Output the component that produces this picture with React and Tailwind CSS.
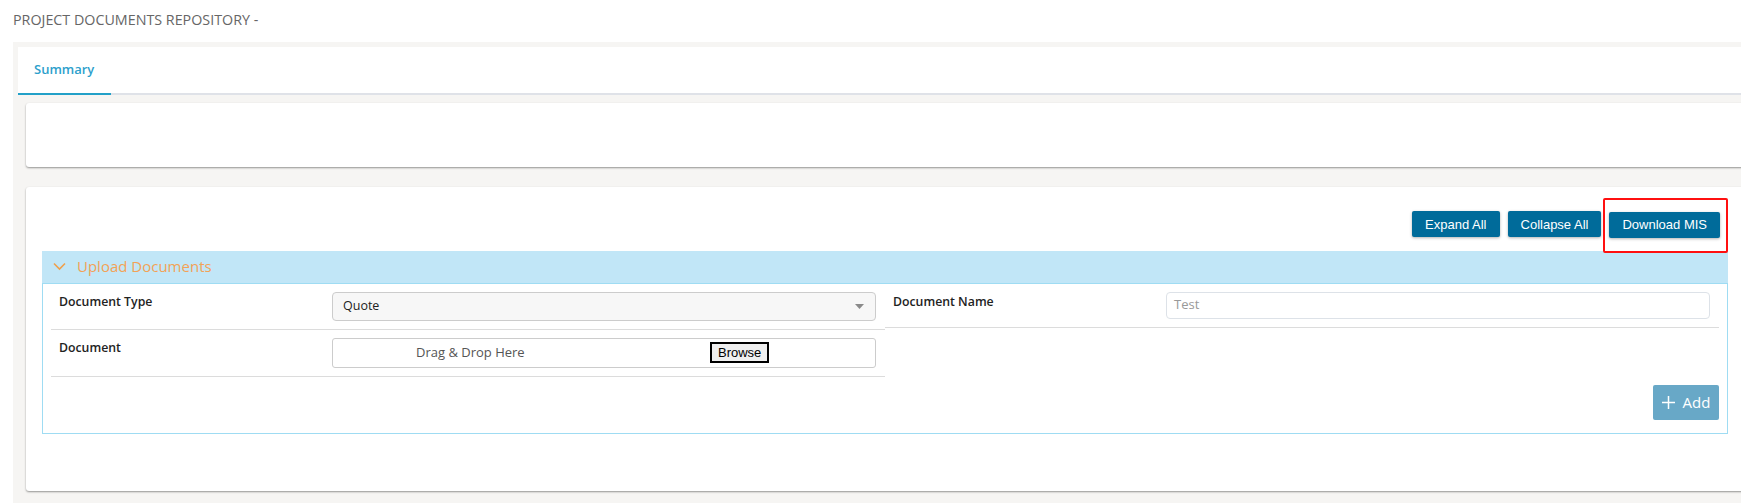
import React from "react";

const OS = { fontFamily: '"Open Sans", "Noto Sans", Arial, sans-serif' };

function Btn({ children }) {
  return (
    <button
      className="h-[26px] px-[13px] rounded-[2px] bg-[#006b9a] text-white text-[13px] leading-none shadow-[0_1px_3px_rgba(0,0,0,0.3)]"
      style={{ fontFamily: '"Liberation Sans", Arial, sans-serif' }}
    >
      {children}
    </button>
  );
}

export default function App() {
  return (
    <div className="w-full h-[503px] overflow-hidden bg-white" style={OS}>
      <div className="h-[42px] pl-[13px] pt-[10px] text-[14.3px] leading-[20px] text-[#666]">
        PROJECT DOCUMENTS REPOSITORY -
      </div>
      <div className="ml-[13px] w-[1760px] h-[461px] bg-[#f6f5f3] pt-[5px] pl-[5px]">
        {/* Tab strip */}
        <div className="h-[48px] bg-white flex flex-col">
          <div className="flex-1 flex items-center pl-[16px] text-[13px] font-semibold text-[#2d9fcc]">
            Summary
          </div>
          <div className="h-[2px] bg-[#dfe2e8] flex">
            <div className="w-[93px] h-[2px] bg-[#22a0c8]" />
          </div>
        </div>
        {/* Card 1 */}
        <div className="ml-[8px] mt-[8px] w-[1718px] h-[64px] bg-white rounded-[3px] shadow-[0_1px_2px_rgba(0,0,0,0.4)]" />
        {/* Card 2 */}
        <div className="ml-[8px] mt-[20px] w-[1718px] h-[304px] bg-white rounded-[3px] shadow-[0_1px_2px_rgba(0,0,0,0.4)] pt-[24px] px-[16px]">
          <div className="flex justify-end gap-[8px] pr-[8px]">
            <Btn>Expand All</Btn>
            <Btn>Collapse All</Btn>
            <div className="relative">
              <Btn>Download MIS</Btn>
              <div className="absolute -left-[6px] -right-[8px] -top-[13px] -bottom-[15px] border-2 border-[#ff1010] rounded-[2px] pointer-events-none" />
            </div>
          </div>
          {/* Accordion header */}
          <div className="mt-[13px] h-[32px] bg-[#c1e6f7] flex items-center pl-[11px]">
            <svg width="13" height="9" viewBox="0 0 13 9" className="mr-[11px]">
              <path d="M1 1.5 L6.5 7 L12 1.5" fill="none" stroke="#f0a04b" strokeWidth="1.6" />
            </svg>
            <span className="text-[15px] text-[#f3a256] leading-none">Upload Documents</span>
          </div>
          {/* Accordion body */}
          <div className="border border-[#9fdcf3] px-[8px] pb-[13px]">
            <div className="flex">
              <div className="w-[834px]">
                <div className="flex py-[8px] border-b border-[#dcdcdc]">
                  <div className="w-[281px] pl-[8px] text-[12.3px] leading-[20px] font-semibold text-[#222]">Document Type</div>
                  <div className="w-[544px] h-[29px] bg-[#f7f7f7] border border-[#cccccc] rounded-[4px] flex items-center pl-[10px] pr-[11px] text-[12.5px] text-[#222]">
                    <span className="flex-1">Quote</span>
                    <svg width="9" height="5" viewBox="0 0 9 5"><path d="M0 0 L9 0 L4.5 5 Z" fill="#8a8a8a" /></svg>
                  </div>
                </div>
                <div className="flex py-[8px] border-b border-[#dcdcdc]">
                  <div className="w-[281px] pl-[8px] text-[12.3px] leading-[20px] font-semibold text-[#222]">Document</div>
                  <div className="w-[544px] h-[30px] bg-white border border-[#cccccc] rounded-[3px] flex items-center text-[13px]">
                    <span className="w-[377px] pl-[83px] text-[#555]">Drag &amp; Drop Here</span>
                    <span
                      className="h-[21px] px-[6px] border-2 border-black bg-[#efefef] text-black text-[13px] leading-[17px]"
                      style={{ fontFamily: '"Liberation Sans", Arial, sans-serif' }}
                    >
                      Browse
                    </span>
                  </div>
                </div>
              </div>
              <div className="w-[834px]">
                <div className="flex py-[8px] border-b border-[#dcdcdc]">
                  <div className="w-[281px] pl-[8px] text-[12.3px] leading-[20px] font-semibold text-[#222]">Document Name</div>
                  <div className="w-[544px] h-[27px] bg-white border border-[#dde2e8] rounded-[4px] flex items-center pl-[7px] text-[13px] text-[#999]">
                    Test
                  </div>
                </div>
              </div>
            </div>
            <div className="flex justify-end mt-[8px]">
              <button className="h-[35px] w-[66px] bg-[#68a8c7] rounded-[2px] flex items-center justify-center gap-[8px] text-white text-[15px]">
                <svg width="13" height="13" viewBox="0 0 13 13"><path d="M6.5 0 V13 M0 6.5 H13" stroke="white" strokeWidth="1.5" /></svg>
                <span className="leading-none">Add</span>
              </button>
            </div>
          </div>
        </div>
      </div>
    </div>
  );
}
